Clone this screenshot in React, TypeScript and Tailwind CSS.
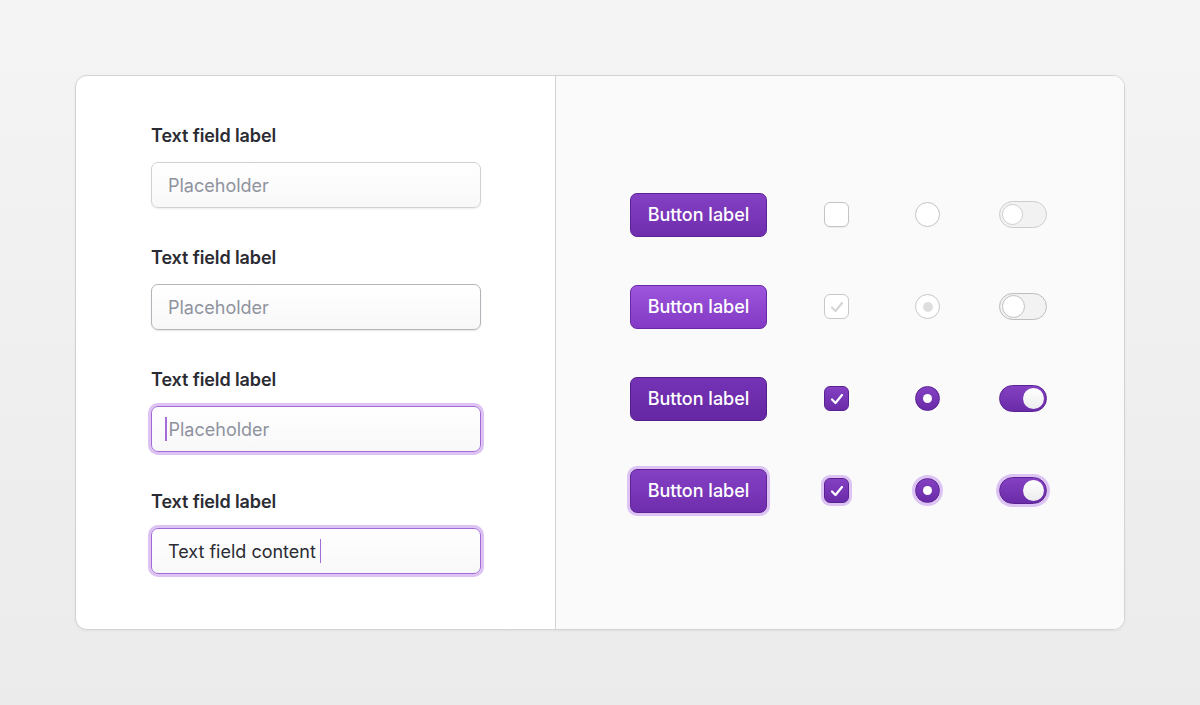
import React from 'react';

const font = { fontFamily: 'Inter, "Noto Sans", sans-serif' };

type FieldProps = { variant: 'default' | 'hover' | 'focus' | 'filled' };

const TextField = ({ variant }: FieldProps) => {
  const box =
    variant === 'default'
      ? 'border border-[#d2d2d6] shadow-[0_1px_2px_rgba(0,0,0,0.08)]'
      : variant === 'hover'
      ? 'border border-[#b4b4ba] shadow-[0_1px_2px_rgba(0,0,0,0.1)]'
      : 'border-[1.5px] border-[#a36ad6] shadow-[0_0_0_3px_#dcc3f4]';
  return (
    <div className="flex flex-col">
      <label className="text-[18px] leading-[22px] font-semibold text-[#2b2b33] tracking-[-0.1px]">
        Text field label
      </label>
      <div
        className={`mt-[15px] h-[46px] w-[330px] rounded-[7px] bg-gradient-to-b from-white to-[#f8f8f9] flex items-center pl-[16px] ${box}`}
      >
        {variant === 'focus' && <span className="w-[1.5px] h-[24px] bg-[#a56bd8] ml-[-3px] mr-[2px]" />}
        {variant === 'filled' ? (
          <>
            <span className="text-[18px] text-[#2b2b33]">Text field content</span>
            <span className="w-[1.5px] h-[24px] bg-[#a56bd8] ml-[4px]" />
          </>
        ) : (
          <span className="text-[18px] text-[#8f939e]">Placeholder</span>
        )}
      </div>
    </div>
  );
};

type State = 'default' | 'hover' | 'active' | 'focus';

const Button = ({ state }: { state: State }) => {
  const cls =
    state === 'default'
      ? 'bg-gradient-to-b from-[#8540c4] to-[#6f2eae] border-[#5e2296]'
      : state === 'hover'
      ? 'bg-gradient-to-b from-[#9c55dc] to-[#8439c4] border-[#6a28a6]'
      : state === 'active'
      ? 'bg-gradient-to-b from-[#7533b5] to-[#6527a3] border-[#531c88]'
      : 'bg-gradient-to-b from-[#8540c4] to-[#6f2eae] border-[#5e2296] shadow-[0_0_0_3px_#dcc3f4]';
  return (
    <button
      className={`w-[137px] h-[44px] rounded-[7px] border text-white text-[18px] font-medium ${cls}`}
      style={font}
    >
      Button label
    </button>
  );
};

const Check = ({ color }: { color: string }) => (
  <svg width="16" height="16" viewBox="0 0 16 16" fill="none">
    <path d="M3 8.5 L6.5 12 L13 4" stroke={color} strokeWidth="2.2" strokeLinecap="round" strokeLinejoin="round" />
  </svg>
);

const Checkbox = ({ state }: { state: State }) => {
  if (state === 'default')
    return (
      <div className="w-[25px] h-[25px] rounded-[6px] border border-[#c4c4c8] bg-white shadow-[0_1px_1px_rgba(0,0,0,0.06)]" />
    );
  if (state === 'hover')
    return (
      <div className="w-[25px] h-[25px] rounded-[6px] border border-[#c8c8cc] bg-white flex items-center justify-center">
        <Check color="#d6d6d9" />
      </div>
    );
  return (
    <div
      className={`w-[25px] h-[25px] rounded-[6px] border border-[#5a2192] bg-gradient-to-b from-[#8441c3] to-[#6a2ba8] flex items-center justify-center ${
        state === 'focus' ? 'shadow-[0_0_0_3px_#dcc3f4]' : ''
      }`}
    >
      <Check color="#ffffff" />
    </div>
  );
};

const Radio = ({ state }: { state: State }) => {
  if (state === 'default')
    return <div className="w-[25px] h-[25px] rounded-full border border-[#c4c4c8] bg-white" />;
  if (state === 'hover')
    return (
      <div className="w-[25px] h-[25px] rounded-full border border-[#c8c8cc] bg-white flex items-center justify-center">
        <div className="w-[10px] h-[10px] rounded-full bg-[#dedee0]" />
      </div>
    );
  return (
    <div
      className={`w-[25px] h-[25px] rounded-full border border-[#5a2192] bg-gradient-to-b from-[#8441c3] to-[#6a2ba8] flex items-center justify-center ${
        state === 'focus' ? 'shadow-[0_0_0_3px_#dcc3f4]' : ''
      }`}
    >
      <div className="w-[9px] h-[9px] rounded-full bg-white" />
    </div>
  );
};

const Toggle = ({ state }: { state: State }) => {
  if (state === 'default' || state === 'hover')
    return (
      <div
        className={`w-[48px] h-[27px] rounded-full border ${
          state === 'hover' ? 'border-[#bdbdc2]' : 'border-[#cdcdd1]'
        } bg-[#f2f2f3] flex items-center pl-[2px]`}
      >
        <div
          className={`rounded-full bg-white border ${
            state === 'hover' ? 'border-[#c0c0c4] w-[23px] h-[23px]' : 'border-[#cdcdd1] w-[21px] h-[21px]'
          }`}
        />
      </div>
    );
  return (
    <div
      className={`w-[48px] h-[27px] rounded-full border border-[#5a2192] bg-gradient-to-b from-[#8441c3] to-[#6a2ba8] flex items-center justify-end pr-[2px] ${
        state === 'focus' ? 'shadow-[0_0_0_3px_#dcc3f4]' : ''
      }`}
    >
      <div className="w-[21px] h-[21px] rounded-full bg-gradient-to-b from-white to-[#ececee]" />
    </div>
  );
};

const states: State[] = ['default', 'hover', 'active', 'focus'];
const fields: FieldProps['variant'][] = ['default', 'hover', 'focus', 'filled'];

export default function App() {
  return (
    <div
      className="w-[1200px] h-[705px] bg-gradient-to-b from-[#f4f4f4] to-[#ebebeb] pt-[75px] pl-[75px]"
      style={font}
    >
      <div className="w-[1050px] h-[555px] rounded-[12px] border border-[#d3d3d6] bg-white flex overflow-hidden shadow-[0_1px_3px_rgba(0,0,0,0.05)]">
        <div className="w-[480px] pl-[75px] pt-[49px] flex flex-col gap-[39px] border-r border-[#d3d3d6]">
          {fields.map((f) => (
            <TextField key={f} variant={f} />
          ))}
        </div>
        <div className="flex-1 bg-[#fafafa] pl-[74px] flex flex-col justify-center gap-[48px]">
          {states.map((s) => (
            <div key={s} className="flex items-center h-[44px]">
              <Button state={s} />
              <div className="ml-[57px]">
                <Checkbox state={s} />
              </div>
              <div className="ml-[66px]">
                <Radio state={s} />
              </div>
              <div className="ml-[59px]">
                <Toggle state={s} />
              </div>
            </div>
          ))}
        </div>
      </div>
    </div>
  );
}
